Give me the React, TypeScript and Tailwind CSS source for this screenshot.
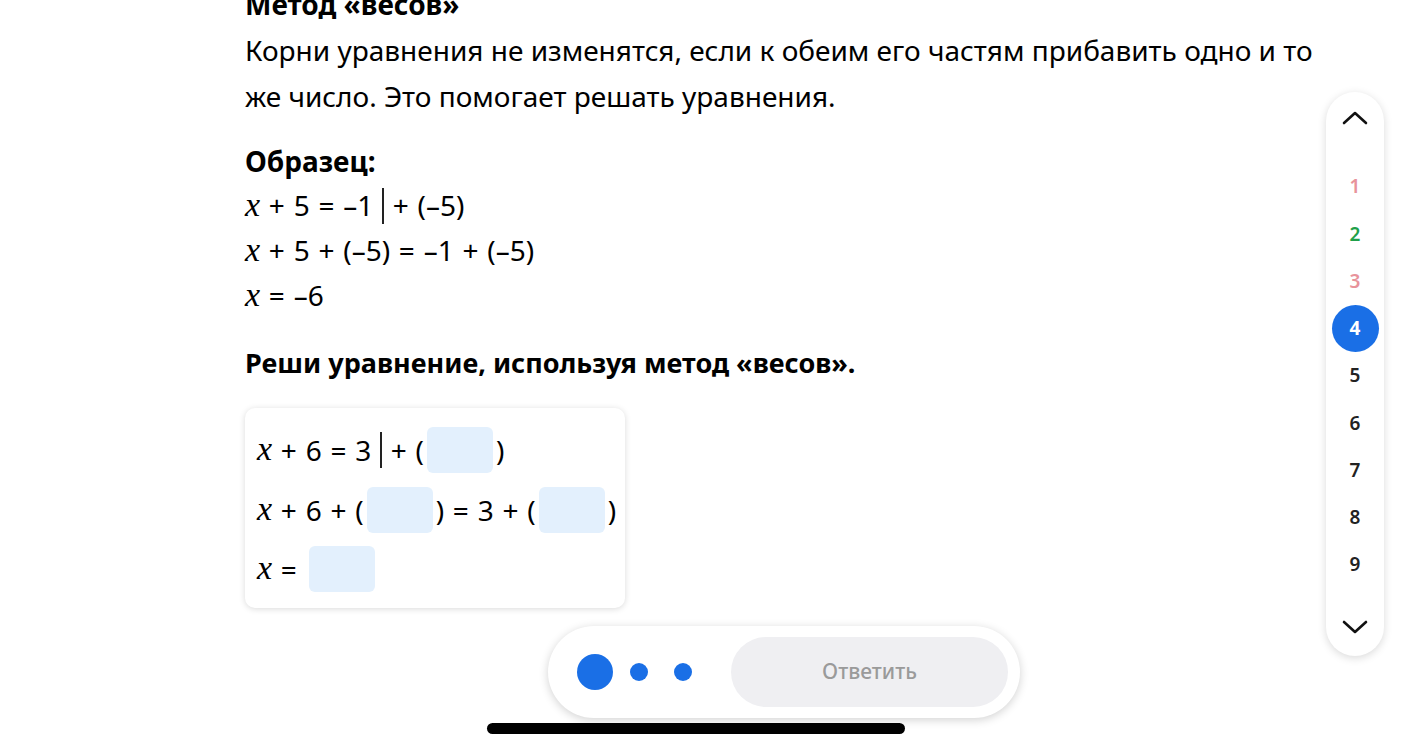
import React from "react";

const X = () => (
  <span className="italic" style={{ fontFamily: '"Liberation Serif", "DejaVu Serif", serif' }}>
    <span className="text-[34px]">x</span>
  </span>
);

const Bar = () => <span className="inline-block w-[1.5px] h-[36px] bg-[#222] mx-[9px] align-middle" />;

const Box = () => <span className="inline-block w-[66px] h-[46px] rounded-[6px] bg-[#e3f0fd] align-middle mx-[3px]" />;

export default function App() {
  const nav = [
    { n: "1", c: "text-[#e8939b]" },
    { n: "2", c: "text-[#1fa04a]" },
    { n: "3", c: "text-[#e8939b]" },
    { n: "4", c: "active" },
    { n: "5", c: "text-[#222]" },
    { n: "6", c: "text-[#222]" },
    { n: "7", c: "text-[#222]" },
    { n: "8", c: "text-[#222]" },
    { n: "9", c: "text-[#222]" },
  ];
  return (
    <div
      className="relative w-[1405px] h-[750px] overflow-hidden bg-white text-black"
      style={{ fontFamily: '"Noto Sans", "Open Sans", sans-serif' }}
    >
      <div className="pl-[245px] -mt-[19px] text-[28px] leading-[46px]">
        <div className="font-bold">Метод «весов»</div>
        <div>
          Корни уравнения не изменятся, если к обеим его частям прибавить одно и то
          <br />
          же число. Это помогает решать уравнения.
        </div>
        <div className="mt-[20px] font-bold leading-[44px]">Образец:</div>
        <div className="leading-[45px] [word-spacing:1.5px]">
          <div className="flex items-center h-[45px]">
            <X />
            <span>&nbsp;+ 5 = –1</span>
            <Bar />
            <span>+ (–5)</span>
          </div>
          <div className="flex items-center h-[45px]">
            <X />
            <span>&nbsp;+ 5 + (–5) = –1 + (–5)</span>
          </div>
          <div className="flex items-center h-[45px]">
            <X />
            <span>&nbsp;= –6</span>
          </div>
        </div>
        <div className="mt-[22px] font-bold text-[27px]">Реши уравнение, используя метод «весов».</div>
        <div className="mt-[22px] w-[380px] h-[200px] rounded-[10px] bg-white shadow-[0_1px_6px_rgba(0,0,0,0.15)] pl-[12px] pt-[19px] [word-spacing:1.5px]">
          <div className="flex items-center h-[46px]">
            <X />
            <span>&nbsp;+ 6 = 3</span>
            <Bar />
            <span>+ (</span>
            <Box />
            <span>)</span>
          </div>
          <div className="flex items-center h-[46px] mt-[14px]">
            <X />
            <span>&nbsp;+ 6 + (</span>
            <Box />
            <span>) = 3 + (</span>
            <Box />
            <span>)</span>
          </div>
          <div className="flex items-center h-[46px] mt-[13px]">
            <X />
            <span>&nbsp;=&nbsp;</span>
            <Box />
          </div>
        </div>
      </div>

      {/* right navigation */}
      <div className="absolute left-[1326px] top-[92px] w-[58px] h-[564px] rounded-full bg-white shadow-[0_2px_8px_rgba(0,0,0,0.15)] flex flex-col items-center">
        <div className="h-[52px] flex items-center justify-center">
          <svg width="26" height="16" viewBox="0 0 26 16" fill="none">
            <path d="M2 13 L13 3 L24 13" stroke="#111" strokeWidth="2.6" strokeLinecap="round" strokeLinejoin="round" />
          </svg>
        </div>
        <div className="mt-[19px] flex flex-col items-center">
          {nav.map((i) =>
            i.c === "active" ? (
              <div key={i.n} className="w-[47px] h-[47px] rounded-full bg-[#1a6fe6] text-white font-bold text-[19px] flex items-center justify-center">
                {i.n}
              </div>
            ) : (
              <div key={i.n} className={`w-[47px] h-[47.3px] flex items-center justify-center font-semibold text-[19px] ${i.c}`}>
                {i.n}
              </div>
            )
          )}
        </div>
        <div className="mt-[31px] flex">
          <svg width="26" height="16" viewBox="0 0 26 16" fill="none">
            <path d="M2 3 L13 13 L24 3" stroke="#111" strokeWidth="2.6" strokeLinecap="round" strokeLinejoin="round" />
          </svg>
        </div>
      </div>

      {/* bottom bar */}
      <div className="absolute left-[548px] top-[626px] w-[472px] h-[92px] rounded-full bg-white shadow-[0_2px_10px_rgba(0,0,0,0.18)] flex items-center pl-[29px] pr-[12px]">
        <div className="w-[36px] h-[36px] rounded-full bg-[#1a6fe6]" />
        <div className="w-[18px] h-[18px] rounded-full bg-[#1a6fe6] ml-[17px]" />
        <div className="w-[18px] h-[18px] rounded-full bg-[#1a6fe6] ml-[26px]" />
        <div className="ml-auto w-[277px] h-[70px] rounded-full bg-[#efeff2] flex items-center justify-center text-[21px] font-medium text-[#9a9a9a]">
          Ответить
        </div>
      </div>

      <div className="absolute left-[487px] top-[723px] w-[418px] h-[11px] rounded-full bg-black" />
    </div>
  );
}
